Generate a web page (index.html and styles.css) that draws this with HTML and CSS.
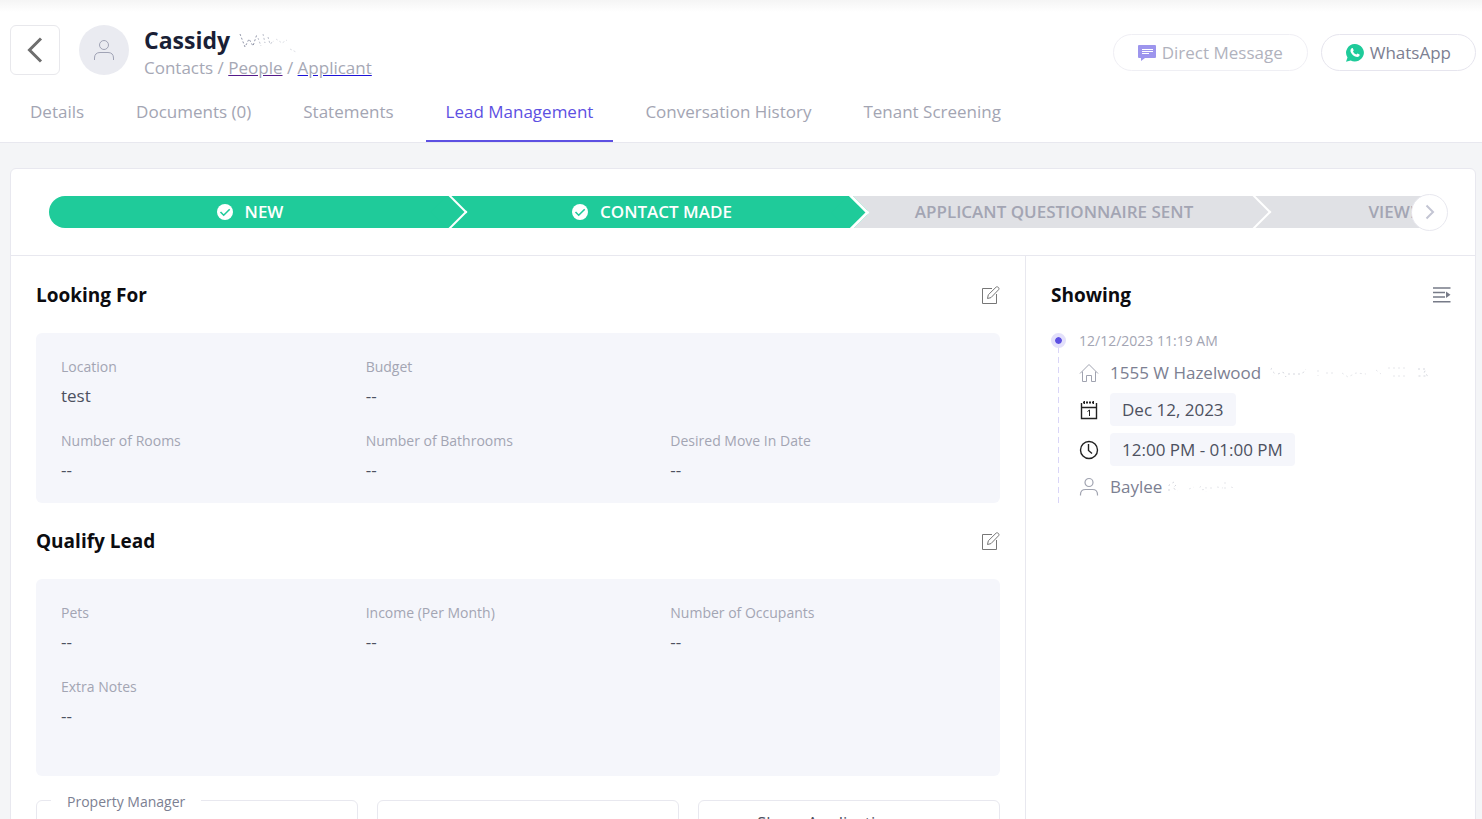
FILE: index.html
```
<!DOCTYPE html>
<html lang="en">
<head>
    <meta charset="UTF-8">
    <meta name="viewport" content="width=device-width, initial-scale=1.0">
    <title>Lead Management</title>
    <link rel="stylesheet" href="styles.css">
</head>
<body>
    <header class="page-header">
        <div class="header-top">
            <button class="back-btn" aria-label="Back">
                <svg width="16" height="26" viewBox="0 0 16 26" fill="none" stroke="#6e6e6e" stroke-width="3"><path d="M14 1.500L2.500 13L14 24.500"/></svg>
            </button>
            <div class="avatar">
                <svg width="22" height="22" viewBox="0 0 22 22" fill="none" stroke="#a0a3b5"><circle cx="11" cy="6" r="4.500"/><path d="M1.500 21v-2c0-3.500 2-5.500 5.500-5.500h8c3.500 0 5.500 2 5.500 5.500v2"/></svg>
            </div>
            <div class="contact">
                <h1>Cassidy
                    <svg class="smudge" width="60" height="24" viewBox="0 0 60 24" fill="none" stroke="#9095a8" stroke-dasharray="2 2"><path d="M2 5l5 13l4-8l4 7l4-12"/><path opacity=".6" d="M20 9l3 8M25 5l2 9M30 8l2 7l4-3"/><path opacity=".3" d="M38 10l6 4l5-3M52 20l6 3"/></svg>
                </h1>
                <div class="breadcrumb">Contacts / <a href="#" class="visited">People</a> / <a href="#">Applicant</a></div>
            </div>
            <div class="header-actions">
                <button class="pill-btn" disabled>
                    <svg width="18" height="18" viewBox="0 0 18 18"><path fill="#5d50e2" d="M1 1h16a1 1 0 0 1 1 1v11a1 1 0 0 1-1 1H7l-4 3v-3H1a1 1 0 0 1-1-1V2a1 1 0 0 1 1-1z"/><path stroke="#fff" d="M4 5.500h11M4 7.500h11M4 9.500h7"/></svg>
                    Direct Message
                </button>
                <button class="pill-btn">
                    <svg width="18" height="18" viewBox="0 0 18 18"><path fill="#1fcb9a" d="M9 0a9 8.700 0 1 1-4.300 16.400L0 17.700l1.500-4.300A8.700 8.700 0 0 1 9 0z"/><path fill="#fff" d="M5.700 4.300c.5-.4 1-.3 1.200.1l.8 1.800c.1.400-.6 1-.7 1.300.7 1.500 1.900 2.500 3.400 3.100.4-.2.800-1.100 1.200-1l1.900 1c.4.300.1 1.200-.4 1.700-1 .9-2.400.9-4 .2-2-.9-3.400-2.300-4.300-4.200-.6-1.500-.4-3 .9-4z"/></svg>
                    WhatsApp
                </button>
            </div>
        </div>
        <nav class="tabs">
            <a href="#">Details</a>
            <a href="#">Documents (0)</a>
            <a href="#">Statements</a>
            <a href="#" class="active">Lead Management</a>
            <a href="#">Conversation History</a>
            <a href="#">Tenant Screening</a>
        </nav>
    </header>

    <main class="card">
        <div class="stages">
            <ol class="stage-list">
                <li class="stage done">
                    <svg width="16" height="16" viewBox="0 0 16 16"><circle cx="8" cy="8" r="8" fill="#fff"/><path d="M3.500 8l3.200 3.200l6-6" fill="none" stroke="#1fcb9a" stroke-width="1.600"/></svg>
                    NEW
                </li>
                <li class="stage done last-done">
                    <svg width="16" height="16" viewBox="0 0 16 16"><circle cx="8" cy="8" r="8" fill="#fff"/><path d="M3.500 8l3.200 3.200l6-6" fill="none" stroke="#1fcb9a" stroke-width="1.600"/></svg>
                    CONTACT MADE
                </li>
                <li class="stage">APPLICANT QUESTIONNAIRE SENT</li>
                <li class="stage">VIEWING SCHEDULED</li>
            </ol>
            <button class="next-btn" aria-label="Next stages">
                <svg width="10" height="16" viewBox="0 0 10 16" fill="none" stroke="#c3c5d3" stroke-width="2"><path d="M1.500 1.500L8 8l-6.500 6.500"/></svg>
            </button>
        </div>

        <div class="card-body">
            <div class="lead-column">
                <section class="lead-section">
                    <div class="section-title">
                        <h2>Looking For</h2>
                        <button class="icon-btn" aria-label="Edit looking for">
                            <svg width="18" height="18" viewBox="0 0 18 18" fill="none" stroke="#777"><path d="M10 2.500H.500v15h14V8"/><path d="M5.500 12.500l.8-3.700L14 1.200c1.300-1.300 4 .8 2.600 2.500L9 11.600z"/></svg>
                        </button>
                    </div>
                    <dl class="field-box">
                        <div><dt>Location</dt><dd>test</dd></div>
                        <div><dt>Budget</dt><dd>--</dd></div>
                        <div class="row-start"><dt>Number of Rooms</dt><dd>--</dd></div>
                        <div><dt>Number of Bathrooms</dt><dd>--</dd></div>
                        <div><dt>Desired Move In Date</dt><dd>--</dd></div>
                    </dl>
                </section>

                <section class="lead-section">
                    <div class="section-title">
                        <h2>Qualify Lead</h2>
                        <button class="icon-btn" aria-label="Edit qualify lead">
                            <svg width="18" height="18" viewBox="0 0 18 18" fill="none" stroke="#777"><path d="M10 2.500H.500v15h14V8"/><path d="M5.500 12.500l.8-3.700L14 1.200c1.300-1.300 4 .8 2.600 2.500L9 11.600z"/></svg>
                        </button>
                    </div>
                    <dl class="field-box tall">
                        <div><dt>Pets</dt><dd>--</dd></div>
                        <div><dt>Income (Per Month)</dt><dd>--</dd></div>
                        <div><dt>Number of Occupants</dt><dd>--</dd></div>
                        <div><dt>Extra Notes</dt><dd>--</dd></div>
                    </dl>
                </section>

                <div class="panels">
                    <fieldset class="panel">
                        <legend>Property Manager</legend>
                    </fieldset>
                    <div class="panel"></div>
                    <div class="panel">Share Application</div>
                </div>
            </div>

            <aside class="showing">
                <div class="section-title">
                    <h2>Showing</h2>
                    <button class="icon-btn" aria-label="Open showings">
                        <svg width="18" height="16" viewBox="0 0 18 16"><path fill="none" stroke="#777b88" stroke-width="1.400" d="M0 1h17.500M0 5.500h12M0 10h12M0 14.700h17.500"/><path fill="#777b88" d="M13 4.500l4.500 3.200L13 11z"/></svg>
                    </button>
                </div>
                <ul class="timeline">
                    <li class="when">12/12/2023 11:19 AM</li>
                    <li>
                        <svg width="20" height="20" viewBox="0 0 20 20" fill="none" stroke="#a0a3b0"><path d="M1 10.500L10 1.500l9 9M3.500 8.500v10h4v-6h5v6h4v-10"/></svg>
                        1555 W Hazelwood
                        <svg class="smudge" width="170" height="20" viewBox="4 0 170 20" fill="none" stroke="#d5d7de" stroke-dasharray="2 3"><path d="M10 5c-4 3 6 4 1 8M16 11l5-2l3 5M26 11h14l4-5"/><path opacity=".6" d="M56 7v6M64 10h8M80 10l6 4l8-4l10 1M114 7l5 4M126 5h20M131 13h14"/><path d="M156 6h8l-2 4l4 3h-10"/></svg>
                    </li>
                    <li>
                        <svg width="20" height="20" viewBox="0 0 20 20" fill="none" stroke="#222"><path stroke-width="1.400" d="M2.500 3v15.500h15V3M2.500 7.500h15"/><path stroke-dasharray="2 1" stroke-width="2" d="M4 2.500h12"/><path d="M5.500 1v3M14.500 1v3M8.500 11.500l2-1.500v6"/></svg>
                        <span class="chip">Dec 12, 2023</span>
                    </li>
                    <li>
                        <svg width="20" height="20" viewBox="0 0 20 20" fill="none" stroke="#222" stroke-width="1.400"><circle cx="10" cy="10" r="8.500"/><path d="M9.500 4v6.500l3.500 3"/></svg>
                        <span class="chip">12:00 PM - 01:00 PM</span>
                    </li>
                    <li>
                        <svg width="20" height="20" viewBox="0 0 20 20" fill="none" stroke="#a0a3b0" stroke-width="1.200"><circle cx="10" cy="5.500" r="4"/><path d="M1.500 18.500v-1c0-3 2-5 5-5h7c3 0 5 2 5 5v1"/></svg>
                        Baylee
                        <svg class="smudge" width="80" height="20" viewBox="4 0 80 20" fill="none" stroke="#d5d7de" stroke-dasharray="2 3"><path d="M6 14V8l5-3M13 8l-3 3l5 3"/><path opacity=".6" d="M26 12l5-2M38 9c-4 3 4 6 5 1v5M48 10v4M54 10l6 1M62 5v9M68 10l3 1"/></svg>
                    </li>
                </ul>
            </aside>
        </div>
    </main>
</body>
</html>
```

FILE: styles.css
```
* {
    box-sizing: border-box;
}
body {
    margin: 0;
    height: 100vh;
    overflow: hidden;
    font-family: "Open Sans", "Noto Sans", sans-serif;
    font-size: 17px;
    line-height: 24px;
    color: #7c8092;
    background-color: #f4f5f7;
}
button {
    font: inherit;
    color: inherit;
    cursor: pointer;
}
svg {
    flex: none;
}

/* Header */
.page-header {
    background: linear-gradient(#f5f5f5, #ffffff 12px);
    border-bottom: 1px solid #e8e8ef;
}
.header-top {
    display: flex;
    align-items: flex-start;
    padding: 25px 6px 0 10px;
}
.back-btn {
    display: flex;
    align-items: center;
    justify-content: center;
    width: 50px;
    height: 50px;
    padding: 0;
    border: 1px solid #e8e8ec;
    border-radius: 6px;
    background-color: #ffffff;
}
.avatar {
    display: flex;
    align-items: center;
    justify-content: center;
    width: 50px;
    height: 50px;
    margin: 0 15px 0 19px;
    border-radius: 50%;
    background-color: #eaebf1;
}
.contact h1 {
    display: flex;
    align-items: center;
    gap: 8px;
    margin: 0;
    font-size: 23px;
    line-height: 31px;
    font-weight: 700;
    color: #1a1f36;
}
.breadcrumb {
    color: #a6a8b5;
}
.breadcrumb a {
    color: #a6a8b5;
    text-decoration-color: #1d12d8;
}
.breadcrumb a.visited {
    text-decoration-color: #551a8b;
}
.header-actions {
    display: flex;
    gap: 13px;
    margin: 9px 0 0 auto;
}
.pill-btn {
    display: flex;
    align-items: center;
    gap: 6px;
    height: 37px;
    padding: 0 24px;
    border: 1px solid #e6e5ee;
    border-radius: 19px;
    background-color: #ffffff;
}
.pill-btn:disabled {
    opacity: 0.6;
    cursor: default;
}
.tabs {
    display: flex;
    gap: 12px;
    padding: 0 10px;
}
.tabs a {
    padding: 20px 20px 16px;
    border-bottom: 2px solid transparent;
    font-weight: 500;
    color: #a3a5b3;
    text-decoration: none;
}
.tabs a.active {
    color: #5d50e2;
    border-bottom-color: #5d50e2;
}

/* Main card */
.card {
    margin: 25px 6px 0 10px;
    border: 1px solid #e8e8ef;
    border-radius: 6px;
    background-color: #ffffff;
}
.stages {
    display: flex;
    align-items: center;
    height: 87px;
    padding: 0 27px 0 38px;
    border-bottom: 1px solid #e8e8ef;
}
.stage-list {
    display: flex;
    flex: 1;
    min-width: 0;
    height: 32px;
    margin: 0;
    padding: 0;
    overflow: hidden;
    border-radius: 16px 0 0 16px;
    list-style: none;
}
.stage {
    position: relative;
    display: flex;
    flex: 0 0 402px;
    align-items: center;
    justify-content: center;
    gap: 12px;
    font-weight: 600;
    color: #a3a5b3;
    background-color: #e0e1e5;
}
.stage::after {
    content: "";
    position: absolute;
    top: 3px;
    right: -11px;
    z-index: 1;
    width: 24px;
    height: 24px;
    border-top: 2px solid #ffffff;
    border-right: 2px solid #ffffff;
    background-color: inherit;
    transform: rotate(45deg);
}
.stage.done {
    color: #ffffff;
    background-color: #1fcb9a;
}
.stage.last-done::after {
    border-width: 3px;
}
.next-btn {
    position: relative;
    z-index: 2;
    display: flex;
    align-items: center;
    justify-content: center;
    width: 37px;
    height: 37px;
    margin-left: -18px;
    padding: 0;
    border: 1px solid #e8e8ef;
    border-radius: 50%;
    background-color: #ffffff;
}
.card-body {
    display: grid;
    grid-template-columns: 1fr 449px;
}
.lead-column {
    padding: 25px;
    border-right: 1px solid #e8e8ef;
}
.section-title {
    display: flex;
    align-items: center;
    justify-content: space-between;
    margin-bottom: 24px;
}
.section-title h2 {
    margin: 0;
    font-size: 19px;
    line-height: 28px;
    font-weight: 700;
    color: #0c0c10;
}
.icon-btn {
    display: flex;
    padding: 0;
    border: none;
    background: none;
}
.lead-section {
    margin-bottom: 24px;
}
.field-box {
    display: grid;
    grid-template-columns: repeat(3, 1fr);
    align-content: start;
    row-gap: 22px;
    margin: 0;
    padding: 22px 25px;
    border-radius: 6px;
    background-color: #f5f6fb;
}
.field-box.tall {
    min-height: 197px;
}
.field-box .row-start {
    grid-column-start: 1;
}
.field-box dt {
    margin-bottom: 6px;
    font-size: 14px;
    line-height: 23px;
    color: #a3a5b3;
}
.field-box dd {
    margin: 0;
    line-height: 23px;
    color: #4d5160;
}
.panels {
    display: grid;
    grid-template-columns: 16fr 15fr 15fr;
    gap: 19px;
}
.panel {
    min-width: 0;
    height: 120px;
    margin: 0;
    padding: 10px 58px;
    border: 1px solid #e8e8ef;
    border-radius: 6px;
    color: #4d5160;
}
fieldset.panel {
    margin-top: -14px;
    padding: 0 14px;
}
.panel legend {
    padding: 4px 16px 0;
    font-size: 14px;
    color: #7c8092;
}

/* Showing timeline */
.showing {
    padding: 25px 24px 25px 25px;
}
.timeline {
    position: relative;
    display: flex;
    flex-direction: column;
    gap: 7px;
    margin: 0;
    padding: 0 0 4px 28px;
    list-style: none;
}
.timeline::before {
    content: "";
    position: absolute;
    top: 14px;
    bottom: 0;
    left: 7px;
    width: 1px;
    background: repeating-linear-gradient(#d9d5f8 0 6px, transparent 6px 10px);
}
.timeline::after {
    content: "";
    position: absolute;
    top: 0;
    left: 0;
    width: 7px;
    height: 7px;
    border: 4px solid #e3e0fb;
    border-radius: 50%;
    background-color: #5d50e2;
    background-clip: padding-box;
}
.timeline li {
    display: flex;
    align-items: center;
    gap: 11px;
    min-height: 27px;
    white-space: nowrap;
}
.timeline .smudge {
    margin-left: -6px;
}
.timeline .when {
    min-height: 19px;
    padding-bottom: 3px;
    font-size: 14px;
    line-height: 16px;
    color: #a3a5b3;
}
.chip {
    padding: 4px 12px;
    border-radius: 4px;
    line-height: 25px;
    color: #4d5160;
    background-color: #f5f6fb;
}
```
